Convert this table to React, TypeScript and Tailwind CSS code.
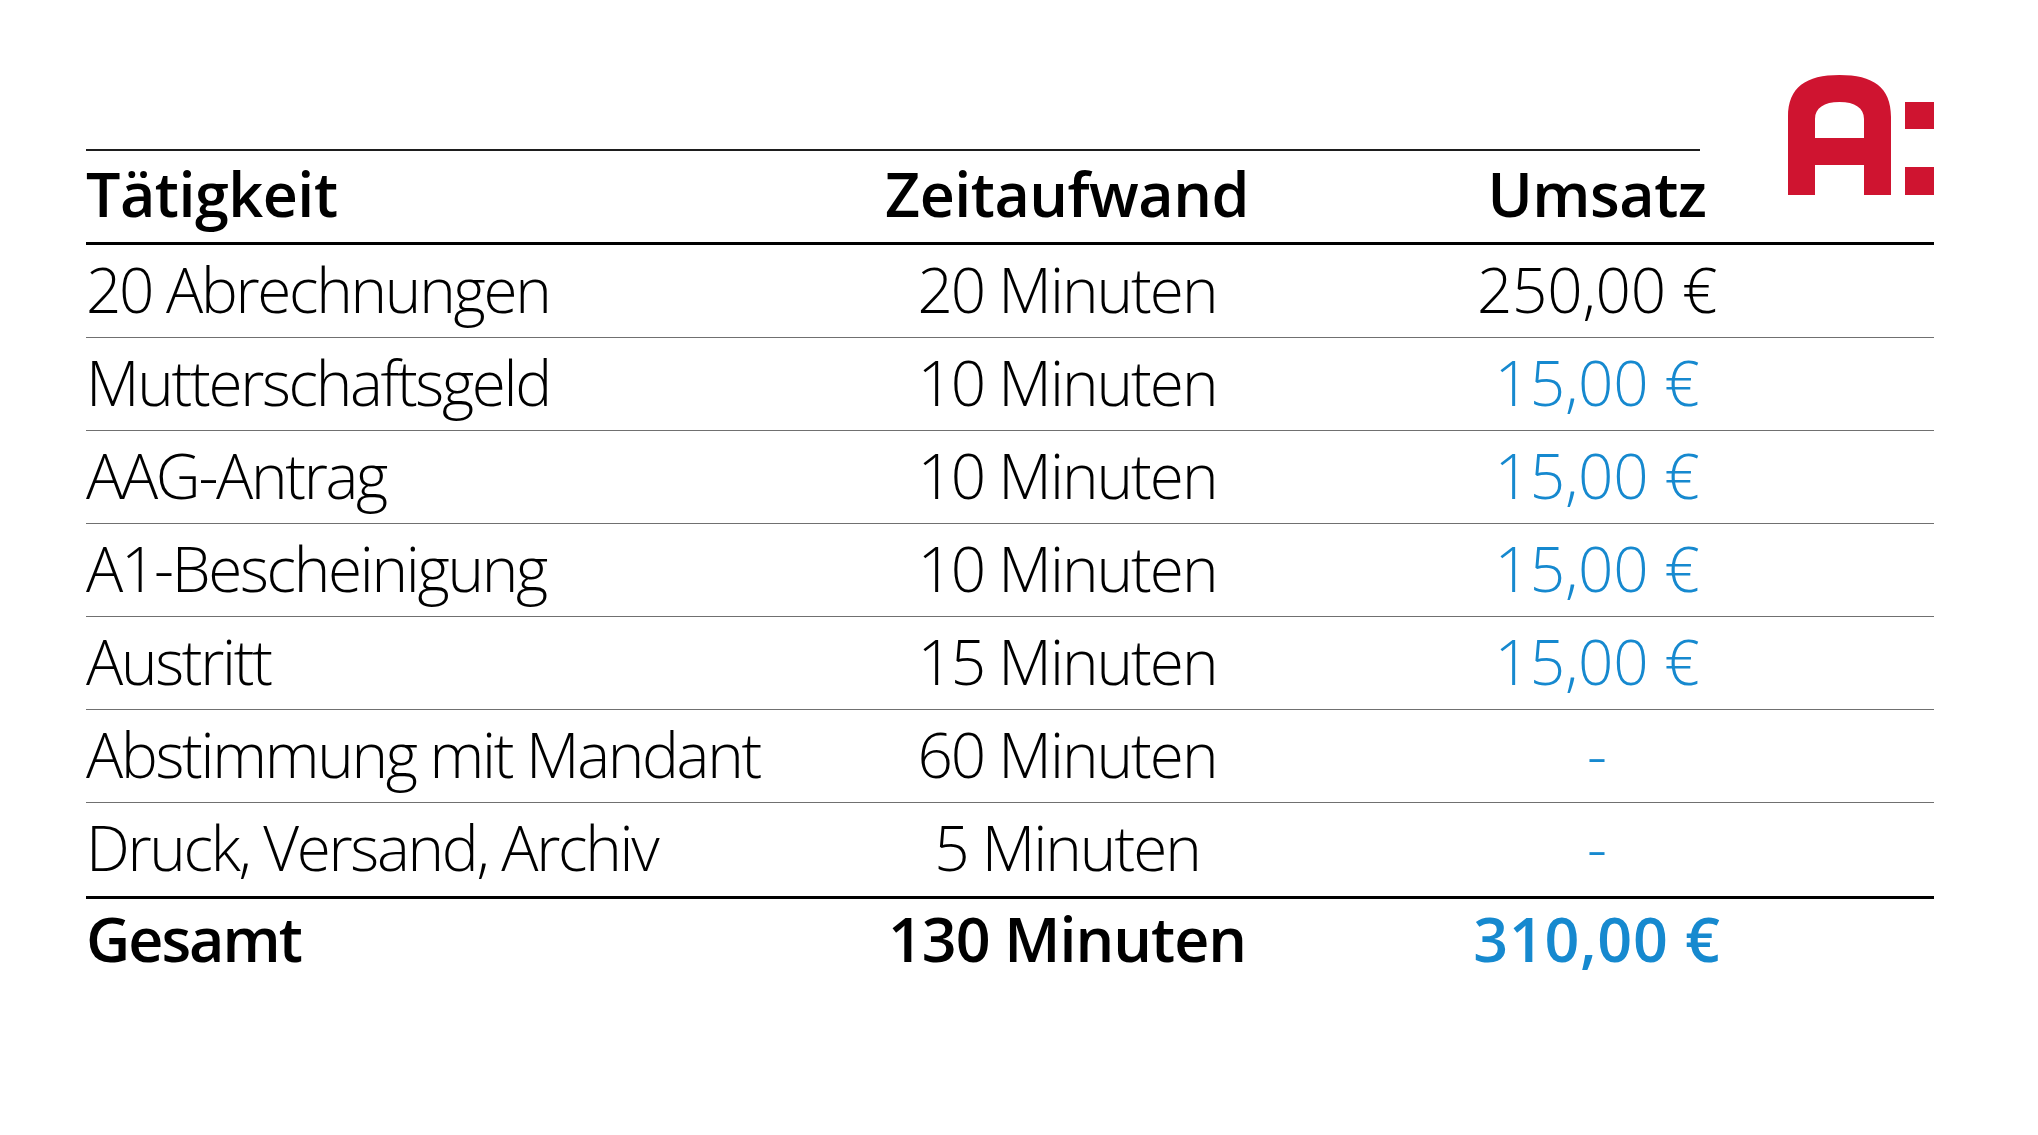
import React from "react";

const rows: { t: string; z: string; u: string; blue?: boolean }[] = [
  { t: "20 Abrechnungen", z: "20 Minuten", u: "250,00 €" },
  { t: "Mutterschaftsgeld", z: "10 Minuten", u: "15,00 €", blue: true },
  { t: "AAG-Antrag", z: "10 Minuten", u: "15,00 €", blue: true },
  { t: "A1-Bescheinigung", z: "10 Minuten", u: "15,00 €", blue: true },
  { t: "Austritt", z: "15 Minuten", u: "15,00 €", blue: true },
  { t: "Abstimmung mit Mandant", z: "60 Minuten", u: "-", blue: true },
  { t: "Druck, Versand, Archiv", z: "5 Minuten", u: "-", blue: true },
];

function Logo() {
  return (
    <svg width="146" height="120" viewBox="0 0 146 120" className="block">
      <path
        fillRule="evenodd"
        fill="#CF1430"
        d="M0,120 V42 C0,12 18,0 51.5,0 C85,0 103,12 103,42 V120 H76 V90 H27 V120 Z M27,63 H76 V44 C76,33 67,27 51.5,27 C36,27 27,33 27,44 Z"
      />
      <rect x="117" y="27" width="29" height="27" fill="#CF1430" />
      <rect x="117" y="92" width="29" height="28" fill="#CF1430" />
    </svg>
  );
}

const grid = "grid grid-cols-[600px_762px_298px_1fr]";

export default function App() {
  return (
    <div
      className="min-h-[1135px] w-[2038px] bg-white text-black"
      style={{ fontFamily: '"Open Sans", "Noto Sans", sans-serif' }}
    >
      <div className="pl-[86px] pt-[149px]">
        <div className="relative w-[1848px]">
          <div className="absolute right-0 top-[-74px]">
            <Logo />
          </div>
          <div className="h-[2px] w-[1614px] bg-[#1e1e1e]" />
          <div className={`${grid} h-[91px] pb-[5px] text-[61px] font-semibold leading-[86px] tracking-[-0.5px]`}>
            <div>Tätigkeit</div>
            <div className="text-center">Zeitaufwand</div>
            <div className="text-center">Umsatz</div>
          </div>
          <div className="h-[3px] bg-black" />
          {rows.map((r, i) => (
            <div
              key={i}
              className={`${grid} h-[93px] pb-[4px] text-[62px] font-light leading-[88px] ${
                i < rows.length - 1 ? "border-b border-[#707070]" : ""
              }`}
            >
              <div className="whitespace-nowrap tracking-[-2.3px]">{r.t}</div>
              <div className="text-center whitespace-nowrap tracking-[-2px]">{r.z}</div>
              <div className={`text-center whitespace-nowrap tracking-[-0.2px] ${r.blue ? "text-[#1689CF]" : ""}`}>
                {r.u}
              </div>
            </div>
          ))}
          <div className="h-[3px] bg-black" />
          <div className={`${grid} h-[80px] text-[61px] font-semibold leading-[80px]`}>
            <div className="tracking-[-2px]">Gesamt</div>
            <div className="text-center tracking-[-1px]">130 Minuten</div>
            <div className="text-center tracking-[0.7px] text-[#1689CF]">310,00 €</div>
          </div>
        </div>
      </div>
    </div>
  );
}
